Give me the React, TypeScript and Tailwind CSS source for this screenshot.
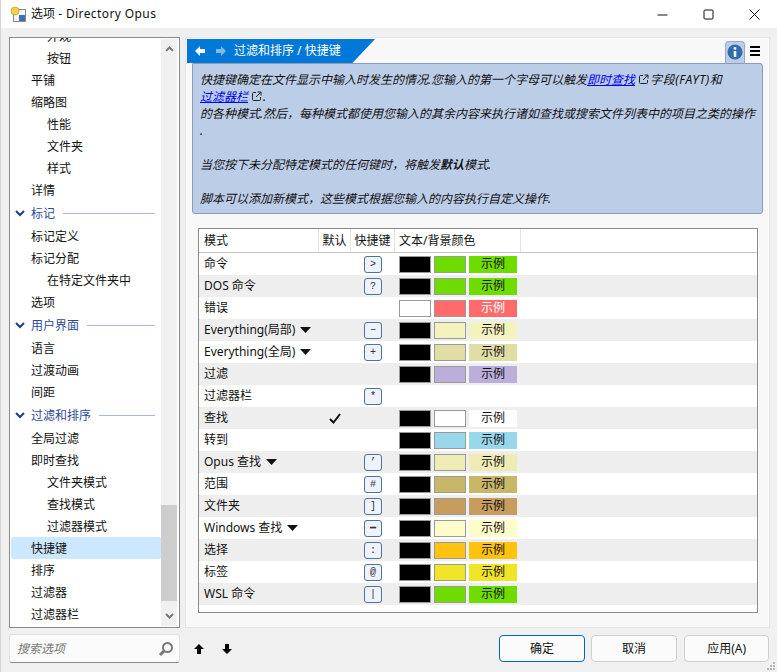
import React from 'react';

const FONT = '"Noto Sans", "Noto Sans CJK SC", sans-serif';

type NavRow = { label: string; level: 0 | 1 | 2 };

const navRows: NavRow[] = [
    { label: '外观', level: 2 },
    { label: '按钮', level: 2 },
    { label: '平铺', level: 1 },
    { label: '缩略图', level: 1 },
    { label: '性能', level: 2 },
    { label: '文件夹', level: 2 },
    { label: '样式', level: 2 },
    { label: '详情', level: 1 },
    { label: '标记', level: 0 },
    { label: '标记定义', level: 1 },
    { label: '标记分配', level: 1 },
    { label: '在特定文件夹中', level: 2 },
    { label: '选项', level: 1 },
    { label: '用户界面', level: 0 },
    { label: '语言', level: 1 },
    { label: '过渡动画', level: 1 },
    { label: '间距', level: 1 },
    { label: '过滤和排序', level: 0 },
    { label: '全局过滤', level: 1 },
    { label: '即时查找', level: 1 },
    { label: '文件夹模式', level: 2 },
    { label: '查找模式', level: 2 },
    { label: '过滤器模式', level: 2 },
    { label: '快捷键', level: 1 },
    { label: '排序', level: 1 },
    { label: '过滤器', level: 1 },
    { label: '过滤器栏', level: 1 },
];

type ModeRow = {
    name: string;
    menu?: boolean;
    check?: boolean;
    key?: string;
    fg?: string;
    bg?: string;
    sampleFg?: string;
};

const modeRows: ModeRow[] = [
    { name: '命令', key: '>', fg: '#000000', bg: '#6fdc00' },
    { name: 'DOS 命令', key: '?', fg: '#000000', bg: '#6fdc00' },
    { name: '错误', fg: '#ffffff', bg: '#ff6b6b', sampleFg: '#ffffff' },
    { name: 'Everything(局部)', menu: true, key: '−', fg: '#000000', bg: '#f5f3bd' },
    { name: 'Everything(全局)', menu: true, key: '+', fg: '#000000', bg: '#e0dda5' },
    { name: '过滤', fg: '#000000', bg: '#bcaedb' },
    { name: '过滤器栏', key: '*' },
    { name: '查找', check: true, fg: '#000000', bg: '#ffffff' },
    { name: '转到', fg: '#000000', bg: '#99d7ea' },
    { name: 'Opus 查找', menu: true, key: '’', fg: '#000000', bg: '#eeebb5' },
    { name: '范围', key: '#', fg: '#000000', bg: '#c9b769' },
    { name: '文件夹', key: ']', fg: '#000000', bg: '#c79c5f' },
    { name: 'Windows 查找', menu: true, key: '━', fg: '#000000', bg: '#fefcc9' },
    { name: '选择', key: ':', fg: '#000000', bg: '#ffc20e' },
    { name: '标签', key: '@', fg: '#000000', bg: '#f0e426' },
    { name: 'WSL 命令', key: '|', fg: '#000000', bg: '#6fdc00' },
];

const ExternalLink = () => (
    <svg width="11" height="11" viewBox="0 0 11 11" className="mr-[1px] ml-[3px] inline-block align-[-1px]" fill="none" stroke="#222" strokeWidth="1">
        <path d="M5 1.5H2.5a1 1 0 0 0-1 1v6a1 1 0 0 0 1 1h6a1 1 0 0 0 1-1V6" />
        <path d="M6.5 1H10v3.5M10 1L5 6" />
    </svg>
);

const Chevron = ({ up }: { up?: boolean }) => (
    <svg width="9" height="6" viewBox="0 0 9 6" fill="none" stroke="#777" strokeWidth="2">
        <path d={up ? 'M1 5l3.5-3.5L8 5' : 'M1 1l3.5 3.5L8 1'} />
    </svg>
);

const NavItem = ({ row }: { row: NavRow }) => {
    if (row.level === 0) {
        return (
            <div className="flex h-[24px] items-center pr-[6px] pl-[4px] text-[#2b4a9b]">
                <svg width="10" height="7" viewBox="0 0 10 7" fill="none" stroke="#1f3a8a" strokeWidth="2" className="mr-[6px]">
                    <path d="M1 1l4 4 4-4" />
                </svg>
                <span className="pt-px">{row.label}</span>
                <div className="ml-[8px] h-px flex-1 bg-[#aab8d8]" />
            </div>
        );
    }
    const selected = row.label === '快捷键';
    return (
        <div className={`flex h-[22px] items-center rounded-[2px] pt-px ${row.level === 1 ? 'pl-[20px]' : 'pl-[36px]'} ${selected ? 'bg-[#cce8ff]' : ''}`}>
            {row.label}
        </div>
    );
};

const Sidebar = () => (
    <div className="flex h-[591px] w-[171px] border border-[#8a8a8f] bg-white">
        <div className="w-[151px] overflow-hidden pl-px">
            <div className="-mt-[13px]">
                {navRows.map((row) => (
                    <NavItem key={row.label + row.level} row={row} />
                ))}
            </div>
        </div>
        <div className="my-[1px] flex w-[16px] flex-col items-center bg-[#f0f0f0] py-[7px]">
            <Chevron up />
            <div className="mt-[453px] h-[100px] w-full bg-[#cdcdcd]" />
            <div className="mt-[12px]">
                <Chevron />
            </div>
        </div>
    </div>
);

const SearchBox = () => (
    <div className="flex h-[29px] w-[171px] items-center justify-between rounded-[3px] border border-[#e2e2e2] border-b-[#8a8a8a] bg-[#fbfbfb] pr-[5px] pl-[7px]">
        <span className="text-[#777] italic">搜索选项</span>
        <svg width="16" height="16" viewBox="0 0 16 16" fill="none" stroke="#777" strokeWidth="2">
            <circle cx="9.5" cy="6.5" r="4.5" />
            <path d="M6 10l-4 4" strokeWidth="3" />
        </svg>
    </div>
);

const Header = () => (
    <div className="flex h-[24px] items-end">
        <div className="flex h-[24px] w-[188px] items-center bg-[#0078d7] pl-[8px] text-white [clip-path:polygon(0_0,100%_0,88%_100%,0_100%)]">
            <svg width="10" height="10" viewBox="0 0 10 10" fill="#ffffff">
                <path d="M0 5l5-5v3h5v4H5v3z" />
            </svg>
            <svg width="10" height="10" viewBox="0 0 10 10" fill="#7fb9e8" className="ml-[11px]">
                <path d="M10 5L5 0v3H0v4h5v3z" />
            </svg>
            <span className="ml-[8px]">过滤和排序 / 快捷键</span>
        </div>
        <div className="ml-auto flex items-center pr-[9px]">
            <div className="flex h-[22px] w-[20px] items-start justify-center rounded-t-[4px] border border-b-0 border-[#9aa9c2] bg-[#bccde8] pt-[2px]">
                <svg width="16" height="16" viewBox="0 0 16 16">
                    <circle cx="8" cy="8" r="7.5" fill="#2f6ca8" />
                    <rect x="6.7" y="7" width="2.6" height="6" fill="#ffffff" />
                    <rect x="6.7" y="3.2" width="2.6" height="2.4" fill="#ffffff" />
                </svg>
            </div>
            <div className="ml-[5px] flex w-[10px] flex-col gap-[2px] pb-[2px]">
                <div className="h-[2px] bg-black" />
                <div className="h-[2px] bg-black" />
                <div className="h-[2px] bg-black" />
            </div>
        </div>
    </div>
);

const InfoBox = () => (
    <div className="mr-[6px] ml-[5px] h-[151px] rounded-b-[3px] rounded-tr-[3px] border border-[#8b9cb8] bg-[#bccde8] px-[7px] pt-[7px] leading-[17px] whitespace-nowrap text-[#111] italic">
        快捷键确定在文件显示中输入时发生的情况.您输入的第一个字母可以触发<span className="text-[#0000ee] underline">即时查找</span>
        <ExternalLink />
        <span className="tracking-[0.6px]">字段(FAYT)和</span>
        <br />
        <span className="text-[#0000ee] underline">过滤器栏</span>
        <ExternalLink />.
        <br />
        的各种模式.然后，每种模式都使用您输入的其余内容来执行诸如查找或搜索文件列表中的项目之类的操作
        <br />.
        <br />
        <br />
        当您按下未分配特定模式的任何键时，将触发<b>默认</b>模式.
        <br />
        <br />
        脚本可以添加新模式，这些模式根据您输入的内容执行自定义操作.
    </div>
);

const Swatch = ({ color }: { color: string }) => (
    <div className="h-[17px] w-[32px] border border-[#9a9a9a]" style={{ backgroundColor: color }} />
);

const Row = ({ row, index }: { row: ModeRow; index: number }) => (
    <div className={`flex h-[22px] items-center ${index % 2 === 1 ? 'bg-[#eeeeee]' : ''}`}>
        <div className="flex w-[120px] items-center pl-[5px]">
            <span>{row.name}</span>
            {row.menu && (
                <svg width="11" height="6" viewBox="0 0 11 6" className="ml-[5px]">
                    <path d="M0 0h11L5.5 6z" fill="#111" />
                </svg>
            )}
        </div>
        <div className="flex w-[32px] justify-center">
            {row.check && (
                <svg width="12" height="11" viewBox="0 0 12 11" fill="none" stroke="#111" strokeWidth="2">
                    <path d="M1 6l3.5 3.5L11 1" />
                </svg>
            )}
        </div>
        <div className="flex w-[44px] justify-center">
            {row.key && (
                <div className="flex h-[17px] w-[18px] items-center justify-center rounded-[3px] border border-[#4f7299] bg-[#eef2fb] font-['Liberation_Mono'] text-[10px] text-[#333]">
                    {row.key}
                </div>
            )}
        </div>
        {row.fg && row.bg && (
            <div className="ml-[4px] flex items-center gap-[3px]">
                <Swatch color={row.fg} />
                <Swatch color={row.bg} />
                <div
                    className="flex h-[17px] w-[48px] items-center justify-center"
                    style={{ backgroundColor: row.bg, color: row.sampleFg ?? '#111' }}
                >
                    示例
                </div>
            </div>
        )}
    </div>
);

const ModeTable = () => (
    <div className="mx-[11px] mt-[14px] h-[385px] border border-[#8a8a8f] bg-white">
        <div className="flex h-[24px] items-center border-b-[1px] border-[#c4c4c4]">
            <div className="flex h-full w-[120px] items-center border-r border-[#e4e4e4] pl-[5px]">模式</div>
            <div className="flex h-full w-[32px] items-center justify-center border-r border-[#e4e4e4]">默认</div>
            <div className="flex h-full w-[44px] items-center justify-center border-r border-[#e4e4e4]">快捷键</div>
            <div className="flex h-full w-[126px] items-center border-r border-[#e4e4e4] pl-[4px]">文本/背景颜色</div>
        </div>
        {modeRows.map((row, index) => (
            <Row key={row.name} row={row} index={index} />
        ))}
    </div>
);

const FooterButton = ({ label, primary, className }: { label: string; primary?: boolean; className?: string }) => (
    <div className={`flex h-[27px] items-center justify-center rounded-[4px] border bg-[#fbfbfb] ${primary ? 'border-[#0067c0]' : 'border-[#cfcfcf]'} ${className ?? 'w-[86px]'}`}>
        {label}
    </div>
);

export default function App() {
    return (
        <div className="relative flex h-[672px] w-[777px] flex-col overflow-hidden border-l border-[#d4d4d4] bg-[#f0f0f0] text-[12px] text-[#111]" style={{ fontFamily: FONT }}>
            <div className="flex h-[28px] items-center bg-white">
                <svg width="17" height="17" viewBox="0 0 17 17" className="ml-[9px]">
                    <rect x="3.5" y="3.5" width="12" height="12" fill="#f4f4f4" stroke="#8a8a8a" />
                    <rect x="9" y="9" width="6" height="6" fill="#3f6fb0" />
                    <circle cx="5" cy="5" r="4" fill="#f2d24a" stroke="#b89a2a" strokeWidth="0.7" />
                </svg>
                <span className="ml-[4px]">
                    选项 <span className="tracking-[0.4px]">- Directory Opus</span>
                </span>
                <div className="ml-auto flex items-center">
                    <svg width="11" height="11" viewBox="0 0 11 11" stroke="#111" strokeWidth="1">
                        <path d="M0.5 6h10" />
                    </svg>
                    <svg width="11" height="11" viewBox="0 0 11 11" fill="none" stroke="#111" strokeWidth="1" className="ml-[35px]">
                        <rect x="1" y="1" width="9" height="9" rx="1" />
                    </svg>
                    <svg width="11" height="11" viewBox="0 0 11 11" stroke="#111" strokeWidth="1" className="mr-[17px] ml-[35px]">
                        <path d="M0.5 0.5l10 10M10.5 0.5l-10 10" />
                    </svg>
                </div>
            </div>
            <div className="flex flex-1 gap-[5px] pt-[9px] pr-[8px] pl-[8px]">
                <div className="flex flex-col">
                    <Sidebar />
                    <div className="mt-[6px] flex items-center">
                        <SearchBox />
                    </div>
                </div>
                <div className="flex flex-1 flex-col">
                    <div className="h-[591px] border border-[#e6e6e6] bg-[#f8f8f8] pt-[1px] pl-[1px]">
                        <Header />
                        <InfoBox />
                        <ModeTable />
                    </div>
                    <div className="mt-[7px] flex items-center">
                        <svg width="10" height="10" viewBox="0 0 10 10" className="ml-[9px]">
                            <path d="M5 0l5 5H7v5H3V5H0z" fill="#000" />
                        </svg>
                        <svg width="10" height="10" viewBox="0 0 10 10" className="ml-[18px]">
                            <path d="M5 10l5-5H7V0H3v5H0z" fill="#000" />
                        </svg>
                        <div className="mr-px ml-auto flex gap-[6px]">
                            <FooterButton label="确定" primary />
                            <FooterButton label="取消" />
                            <FooterButton label="应用(A)" className="ml-px w-[85px]" />
                        </div>
                    </div>
                </div>
            </div>
            <svg width="10" height="10" viewBox="0 0 10 10" fill="#b8b8b8" className="absolute right-[1px] bottom-[1px]">
                <rect x="7" y="1" width="2" height="2" />
                <rect x="4" y="4" width="2" height="2" />
                <rect x="7" y="4" width="2" height="2" />
                <rect x="1" y="7" width="2" height="2" />
                <rect x="4" y="7" width="2" height="2" />
                <rect x="7" y="7" width="2" height="2" />
            </svg>
        </div>
    );
}
